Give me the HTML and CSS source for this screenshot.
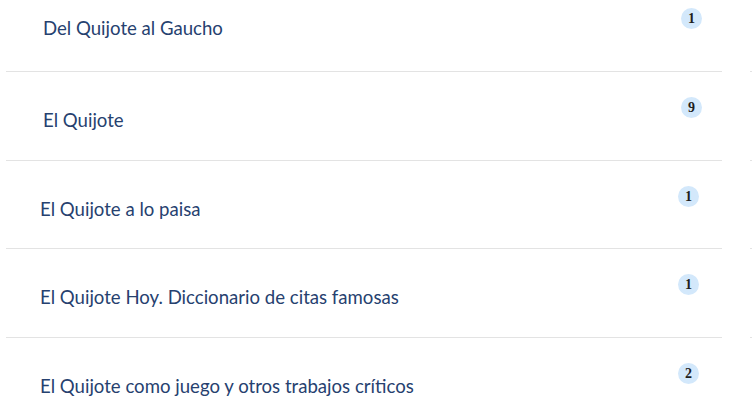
FILE: index.html
```html
<!DOCTYPE html>
<html lang="es">
<head>
<meta charset="utf-8">
<title>Títulos</title>
<link rel="stylesheet" href="styles.css">
</head>
<body>
<div class="page">
  <ul class="list">
    <li class="row row--wide row--first"><span class="title">Del Quijote al Gaucho</span><span class="badge">1</span></li>
    <li class="row row--wide"><span class="title">El Quijote</span><span class="badge">9</span></li>
    <li class="row"><span class="title">El Quijote a lo paisa</span><span class="badge">1</span></li>
    <li class="row"><span class="title">El Quijote Hoy. Diccionario de citas famosas</span><span class="badge">1</span></li>
    <li class="row"><span class="title">El Quijote como juego y otros trabajos críticos</span><span class="badge">2</span></li>
  </ul>
  <ul class="list list--next">
    <li class="row"></li>
    <li class="row"></li>
    <li class="row"></li>
    <li class="row"></li>
    <li class="row"></li>
  </ul>
</div>
</body>
</html>
```

FILE: styles.css
```css
html, body {
  margin: 0;
  padding: 0;
  background: #ffffff;
  overflow: hidden;
}

.page {
  display: grid;
  grid-template-columns: 716px minmax(0, 1fr);
  column-gap: 28px;
  width: 752px;
  box-sizing: border-box;
  padding-left: 6px;
  margin-top: -16.67px;
}

.list {
  list-style: none;
  margin: 0;
  padding: 0;
  min-width: 0;
}

.row {
  display: flex;
  justify-content: space-between;
  align-items: flex-start;
  height: 87.67px;
  box-sizing: content-box;
  border-bottom: 1px solid #e3e3e3;
  padding: 0 23px 0 34px;
}

.list--next .row {
  padding: 0;
}

.row--wide {
  padding: 0 20px 0 37px;
}

.title {
  margin-top: 36px;
  font-family: Lato, "Liberation Sans", sans-serif;
  font-size: 18.6px;
  line-height: 24px;
  color: #26416f;
}

.row--first .title {
  margin-top: 33px;
}

.badge {
  margin-top: 25px;
  width: 21px;
  height: 21px;
  border-radius: 50%;
  background: #d3e8fb;
  color: #1e1e1e;
  font-family: "Liberation Serif", "DejaVu Serif", serif;
  font-weight: bold;
  font-size: 14px;
  line-height: 21px;
  text-align: center;
}
```
